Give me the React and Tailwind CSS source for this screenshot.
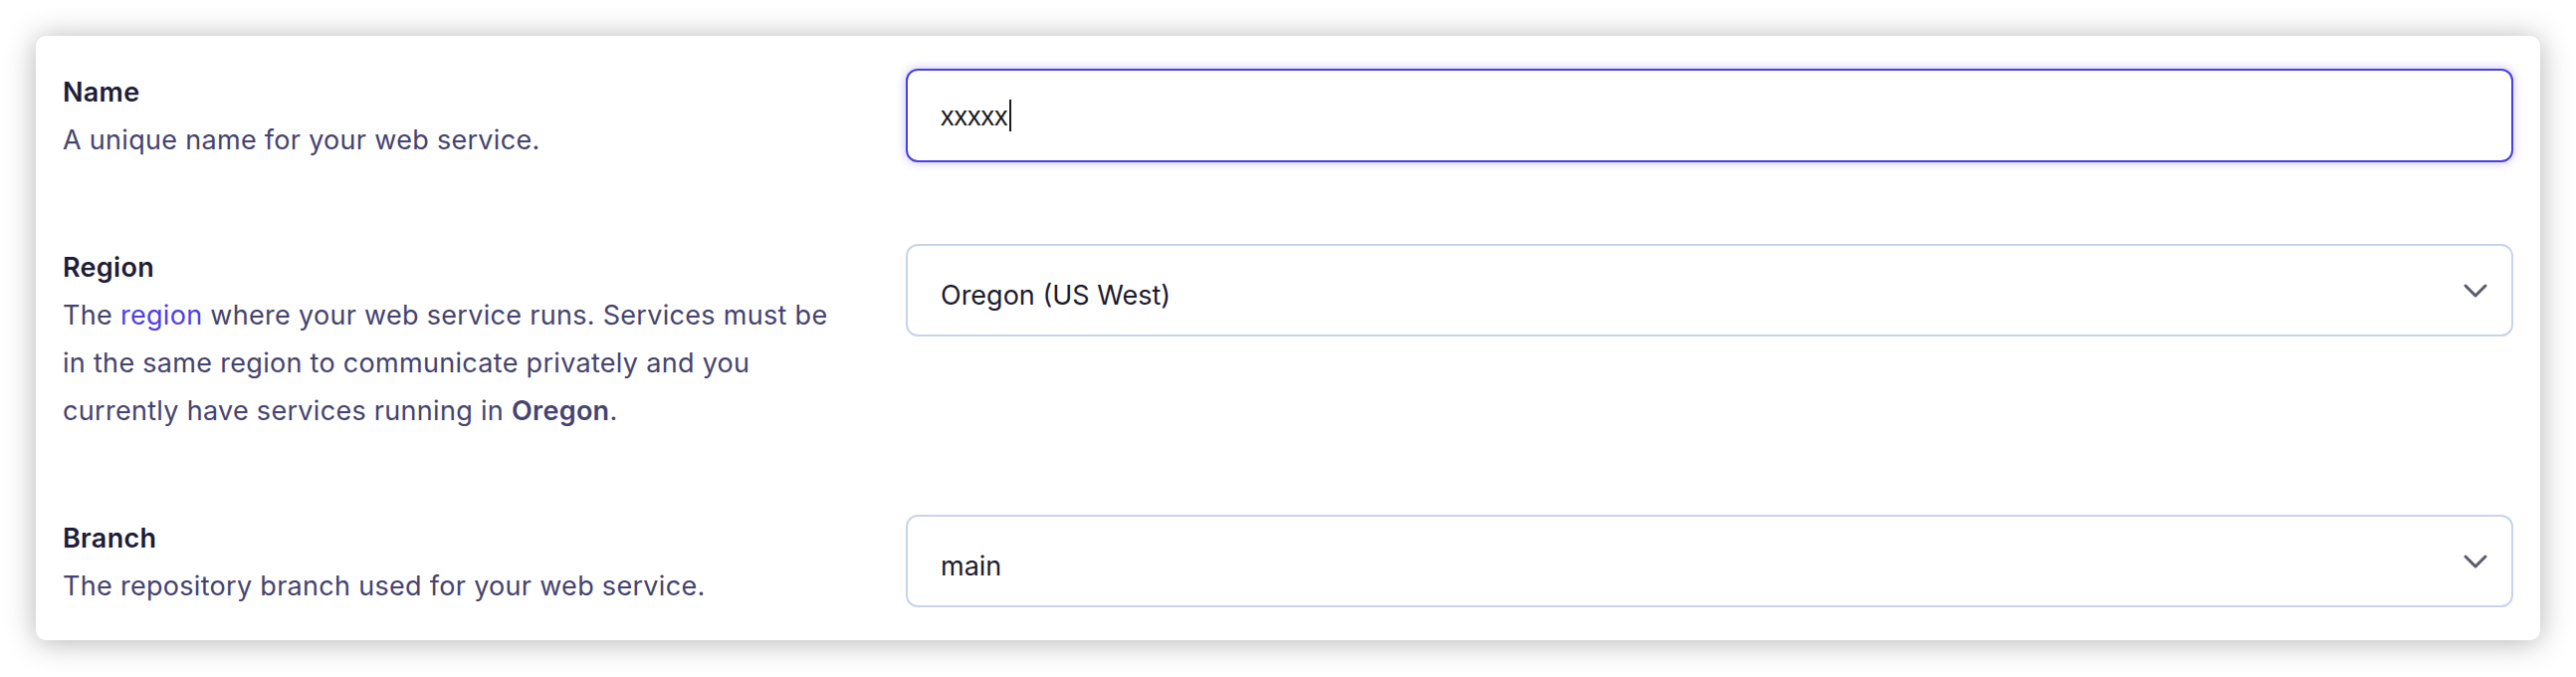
import { ChevronDown } from 'lucide-react'

const sans = "font-['Inter',sans-serif]"

function Field({ label, children, control }) {
  return (
    <div className="grid grid-cols-[807px_1fr] items-start gap-[40px]">
      <div className="max-w-[780px] tracking-[0.3px]">
        <div className="text-[27px] font-semibold leading-[48px] text-[#1e1c38]">{label}</div>
        <div className="text-[27px] leading-[48px] text-[#45436f]">{children}</div>
      </div>
      {control}
    </div>
  )
}

function Select({ value }) {
  return (
    <div className="flex h-[93px] items-center justify-between rounded-[12px] border-2 border-[#c8d3eb] bg-white pl-[33px] pr-[16px] pt-[9px]">
      <span className="text-[27px] leading-[27px] text-[#1c1b2e]">{value}</span>
      <ChevronDown className="-mt-[9px] h-[40px] w-[40px] text-[#5b5b6e]" strokeWidth={1.8} />
    </div>
  )
}

export default function App() {
  return (
    <div className={`min-h-screen bg-white p-[36px] ${sans}`}>
      <div className="flex flex-col gap-[80px] rounded-[10px] bg-white px-[27px] pb-[30px] pt-[33px] shadow-[0_2px_30px_rgba(0,0,0,0.3)]">
        <Field
          label="Name"
          control={
            <div className="flex h-[94px] items-center rounded-[12px] border-2 border-[#4a3fe0] bg-white pl-[33px] pt-[3px] shadow-[0_0_10px_rgba(79,70,229,0.35)]">
              <span className="font-['Liberation_Sans',sans-serif] text-[27px] leading-[27px] text-[#1a1a22]">xxxxx</span>
              <span className="ml-[1px] -mt-[3px] h-[32px] w-[2px] bg-[#1a1a1a]" />
            </div>
          }
        >
          A unique name for your web service.
        </Field>

        <Field label="Region" control={<Select value="Oregon (US West)" />}>
          The <a href="#" className="text-[#4f3fe6]">region</a> where your web service runs. Services must be in the same region to
          communicate privately and you currently have services running in{' '}
          <span className="font-semibold">Oregon</span>.
        </Field>

        <Field label="Branch" control={<Select value="main" />}>
          The repository branch used for your web service.
        </Field>
      </div>
    </div>
  )
}
